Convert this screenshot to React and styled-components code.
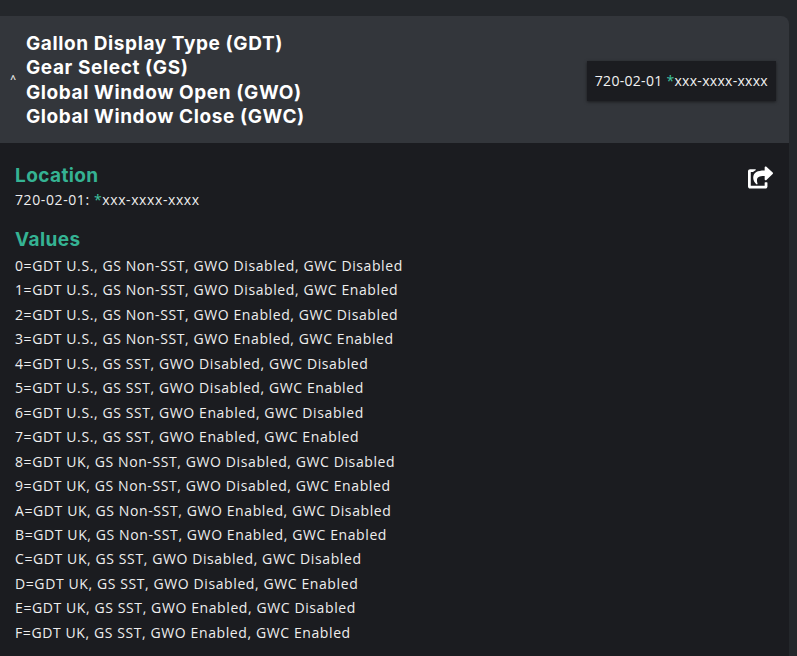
import React from "react";
import styled, { createGlobalStyle } from "styled-components";
import { FaShareSquare } from "react-icons/fa";

const Global = createGlobalStyle`
  html, body { margin: 0; background: #24272b; }
  body { font-family: "Open Sans", "Noto Sans", sans-serif; color: #f2f2f2; }
`;

const Page = styled.div`
  padding-top: 16px;
  width: 797px;
  height: 640px;
  display: flex;
  flex-direction: column;
`;
const Header = styled.div`
  width: 789px;
  height: 127px;
  background: #33363b;
  border-top-right-radius: 8px;
  display: flex;
  align-items: center;
  box-sizing: border-box;
`;
const Chevron = styled.div`
  width: 26px;
  text-align: center;
  font-size: 20px;
  font-weight: 700;
  color: #ddd;
  margin-top: 8px;
`;
const Titles = styled.div`
  flex: 1;
  font-family: "Inter", sans-serif;
  font-weight: 700;
  font-size: 19px;
  letter-spacing: 0.6px;
  line-height: 24.5px;
  color: #fff;
  margin-top: 2px;
`;
const Badge = styled.div`
  background: #1b1c20;
  padding: 0 8px;
  height: 40px;
  display: flex;
  align-items: center;
  font-size: 14px;
  letter-spacing: 0.3px;
  margin-right: 13px;
  margin-top: 2px;
  box-shadow: 0 1px 3px rgba(0,0,0,.5);
`;
const Star = styled.span`
  color: #3fc5a0;
`;
const Body = styled.div`
  width: 789px;
  flex: 1;
  background: #1b1c20;
  padding: 21px 15px 0 15px;
  box-sizing: border-box;
  position: relative;
`;
const Share = styled.div`
  position: absolute;
  right: 16px;
  top: 20px;
  color: #fff;
  font-size: 25px;
`;
const Heading = styled.div`
  color: #35b393;
  font-family: "Inter", sans-serif;
  font-weight: 700;
  font-size: 19px;
  letter-spacing: 0.4px;
  line-height: 24px;
`;
const Line = styled.div`
  font-size: 14px;
  letter-spacing: 0.6px;
  line-height: 24.45px;
  color: #eee;
`;
const Loc = styled(Line)`
  line-height: 24px;
  margin-bottom: 16px;
`;
const Values = styled.div`
  margin-top: 2px;
`;

const vals = [
  "0=GDT U.S., GS Non-SST, GWO Disabled, GWC Disabled",
  "1=GDT U.S., GS Non-SST, GWO Disabled, GWC Enabled",
  "2=GDT U.S., GS Non-SST, GWO Enabled, GWC Disabled",
  "3=GDT U.S., GS Non-SST, GWO Enabled, GWC Enabled",
  "4=GDT U.S., GS SST, GWO Disabled, GWC Disabled",
  "5=GDT U.S., GS SST, GWO Disabled, GWC Enabled",
  "6=GDT U.S., GS SST, GWO Enabled, GWC Disabled",
  "7=GDT U.S., GS SST, GWO Enabled, GWC Enabled",
  "8=GDT UK, GS Non-SST, GWO Disabled, GWC Disabled",
  "9=GDT UK, GS Non-SST, GWO Disabled, GWC Enabled",
  "A=GDT UK, GS Non-SST, GWO Enabled, GWC Disabled",
  "B=GDT UK, GS Non-SST, GWO Enabled, GWC Enabled",
  "C=GDT UK, GS SST, GWO Disabled, GWC Disabled",
  "D=GDT UK, GS SST, GWO Disabled, GWC Enabled",
  "E=GDT UK, GS SST, GWO Enabled, GWC Disabled",
  "F=GDT UK, GS SST, GWO Enabled, GWC Enabled",
];

export default function App() {
  return (
    <>
      <Global />
      <Page>
        <Header>
          <Chevron>˄</Chevron>
          <Titles>
            <div>Gallon Display Type (GDT)</div>
            <div>Gear Select (GS)</div>
            <div>Global Window Open (GWO)</div>
            <div>Global Window Close (GWC)</div>
          </Titles>
          <Badge>720-02-01&nbsp;<Star>*</Star>xxx-xxxx-xxxx</Badge>
        </Header>
        <Body>
          <Share><FaShareSquare /></Share>
          <Heading>Location</Heading>
          <Loc>720-02-01: <Star>*</Star>xxx-xxxx-xxxx</Loc>
          <Heading>Values</Heading>
          <Values>
            {vals.map((v) => <Line key={v}>{v}</Line>)}
          </Values>
        </Body>
      </Page>
    </>
  );
}
